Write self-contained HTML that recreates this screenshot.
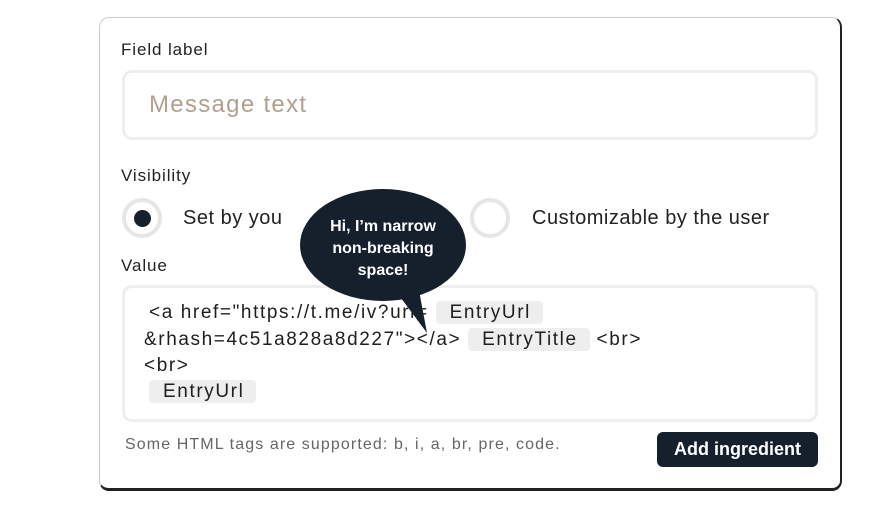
<!DOCTYPE html>
<html><head><style>
body{margin:0;width:880px;height:513px;background:#fff;position:relative;overflow:hidden;font-family:"Liberation Sans",sans-serif;color:#222;}
.a{position:absolute;white-space:nowrap}
.card{position:absolute;left:99px;top:17px;width:743px;height:474px;border:1px solid #c8ccd0;border-right:2px solid #222;border-bottom:3px solid #222;border-radius:10px;box-sizing:border-box}
.box{position:absolute;border:3px solid #eee;border-radius:10px;box-sizing:border-box}
.radio{position:absolute;width:40px;height:40px;border:4px solid #e6e6e6;border-radius:50%;box-sizing:border-box}
.dot{position:absolute;left:8px;top:8px;width:17px;height:17px;border-radius:50%;background:#16202c}
.code{font-size:19px;color:#1e1e1e;letter-spacing:1.6px}
.pill{background:#eee;border-radius:4px;padding:1px 12px 1px 14px}
.lbl{font-size:17px;letter-spacing:0.9px}
</style></head><body>
<div class="card"></div>
<div class="a lbl" style="left:121px;top:40px">Field label</div>
<div class="box" style="left:122px;top:70px;width:696px;height:70px"></div>
<div class="a" style="left:149px;top:91px;font-size:24px;letter-spacing:1.3px;color:#b0a090">Message text</div>
<div class="a lbl" style="left:121px;top:166px">Visibility</div>
<div class="radio" style="left:122px;top:198px"><div class="dot"></div></div>
<div class="a" style="left:183px;top:207px;font-size:20px;letter-spacing:0.5px">Set by you</div>
<div class="radio" style="left:470px;top:198px"></div>
<div class="a" style="left:532px;top:207px;font-size:20px;letter-spacing:0.5px">Customizable by the user</div>
<div class="a lbl" style="left:121px;top:256px">Value</div>
<div class="box" style="left:122px;top:285px;width:696px;height:137px"></div>
<div class="a code" style="left:149px;top:302px">&lt;a href="https://t.me/iv?url= <span class="pill">EntryUrl</span></div>
<div class="a code" style="left:144px;top:329px">&amp;rhash=4c51a828a8d227"&gt;&lt;/a&gt; <span class="pill">EntryTitle</span> &lt;br&gt;</div>
<div class="a code" style="left:144px;top:355px">&lt;br&gt;</div>
<div class="a code" style="left:149px;top:381px"><span class="pill">EntryUrl</span></div>
<svg class="a" style="left:300px;top:185px" width="190" height="155"><ellipse cx="83" cy="60" rx="83" ry="56" fill="#16202c"/><path d="M95 105 L127 148 L118 100Z" fill="#16202c"/></svg>
<div class="a" style="left:298px;top:216px;width:170px;text-align:center;color:#fff;font-weight:bold;font-size:16px;line-height:22px">Hi, I’m narrow<br>non-breaking<br>space!</div>
<div class="a" style="left:125px;top:436px;font-size:16px;letter-spacing:1.1px;color:#666">Some HTML tags are supported: b, i, a, br, pre, code.</div>
<div class="a" style="left:657px;top:432px;width:161px;height:35px;background:#16202c;border-radius:6px;color:#fff;font-weight:bold;font-size:18px;line-height:35px;text-align:center">Add ingredient</div>
</body></html>
